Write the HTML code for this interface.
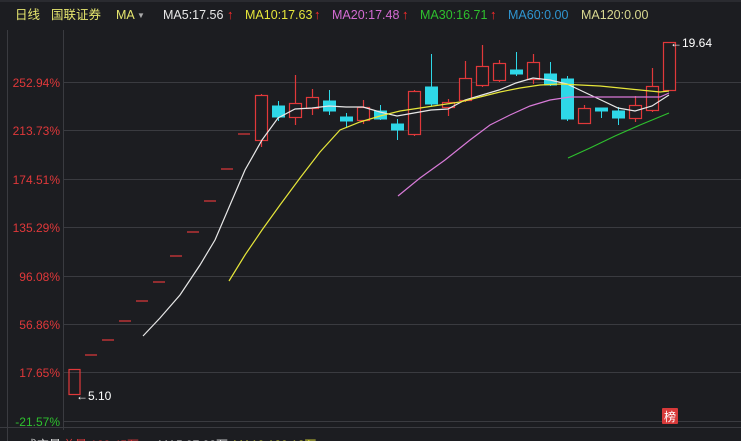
<!DOCTYPE html>
<html><head><meta charset="utf-8"><style>
html,body{margin:0;padding:0;background:#1c1d21;width:741px;height:441px;overflow:hidden}
svg{display:block}
text{font-family:"Liberation Sans","Noto Sans CJK SC",sans-serif}
</style></head><body>
<svg width="741" height="441" viewBox="0 0 741 441" xmlns="http://www.w3.org/2000/svg">
<rect width="741" height="441" fill="#1c1d21"/>
<rect x="0" y="0" width="741" height="2" fill="#2a2b30"/>
<line x1="7.5" y1="30" x2="7.5" y2="441" stroke="#3a3b40"/>
<line x1="63.5" y1="30" x2="63.5" y2="430" stroke="#3a3b40"/>
<g stroke="#3a3b40" stroke-width="1">
<line x1="63" y1="82.5" x2="741" y2="82.5"/>
<line x1="63" y1="130.5" x2="741" y2="130.5"/>
<line x1="63" y1="179.5" x2="741" y2="179.5"/>
<line x1="63" y1="227.5" x2="741" y2="227.5"/>
<line x1="63" y1="276.5" x2="741" y2="276.5"/>
<line x1="63" y1="324.5" x2="741" y2="324.5"/>
<line x1="63" y1="372.5" x2="741" y2="372.5"/>
<line x1="63" y1="421.5" x2="741" y2="421.5"/>
<line x1="0" y1="427.5" x2="741" y2="427.5"/>
</g>
<g font-size="12.5">
<text x="15" y="19" fill="#e6e66e">日线</text>
<text x="51" y="19" fill="#e6e66e">国联证券</text>
<text x="116" y="19" fill="#e6e66e">MA</text>
<text x="137" y="18" fill="#aaa" font-size="8">▼</text>
<text x="163" y="19" fill="#e8e8e8">MA5:17.56</text><text x="227" y="19" fill="#ff2a2a" font-weight="bold" font-size="13">↑</text>
<text x="245" y="19" fill="#e6e63a">MA10:17.63</text><text x="314" y="19" fill="#ff2a2a" font-weight="bold" font-size="13">↑</text>
<text x="332" y="19" fill="#d36bd3">MA20:17.48</text><text x="402" y="19" fill="#ff2a2a" font-weight="bold" font-size="13">↑</text>
<text x="420" y="19" fill="#2ec02e">MA30:16.71</text><text x="490" y="19" fill="#ff2a2a" font-weight="bold" font-size="13">↑</text>
<text x="508" y="19" fill="#2f95d0">MA60:0.00</text>
<text x="581" y="19" fill="#d8d890">MA120:0.00</text>
</g>
<g font-size="12" fill="#e0383a" text-anchor="end">
<text x="60" y="87">252.94%</text>
<text x="60" y="135">213.73%</text>
<text x="60" y="184">174.51%</text>
<text x="60" y="232">135.29%</text>
<text x="60" y="281">96.08%</text>
<text x="60" y="329">56.86%</text>
<text x="60" y="377">17.65%</text>
<text x="60" y="426" fill="#2ec02e">-21.57%</text>
</g>
<g stroke="#e0383a" stroke-width="1.2" fill="none">
<rect x="69" y="369.5" width="11" height="25"/>
<line x1="85" y1="355" x2="97" y2="355"/>
<line x1="102" y1="340" x2="114" y2="340"/>
<line x1="119" y1="321" x2="131" y2="321"/>
<line x1="136" y1="301" x2="148" y2="301"/>
<line x1="153" y1="282" x2="165" y2="282"/>
<line x1="170" y1="256" x2="182" y2="256"/>
<line x1="187" y1="232" x2="199" y2="232"/>
<line x1="204" y1="201" x2="216" y2="201"/>
<line x1="221" y1="169" x2="233" y2="169"/>
<line x1="238" y1="134" x2="250" y2="134"/>
<line x1="261.5" y1="94" x2="261.5" y2="147"/><rect x="255.5" y="95.5" width="12" height="45" fill="#1c1d21"/>
<line x1="295.5" y1="75" x2="295.5" y2="125"/><rect x="289.5" y="103.5" width="12" height="14" fill="#1c1d21"/>
<line x1="312.5" y1="89" x2="312.5" y2="115"/><rect x="306.5" y="97.5" width="12" height="11" fill="#1c1d21"/>
<line x1="363.5" y1="100" x2="363.5" y2="124"/><rect x="357.5" y="107.5" width="12" height="13" fill="#1c1d21"/>
<line x1="414.5" y1="90" x2="414.5" y2="136"/><rect x="408.5" y="91.5" width="12" height="43" fill="#1c1d21"/>
<line x1="448.5" y1="99" x2="448.5" y2="116"/><rect x="442.5" y="102.5" width="12" height="5" fill="#1c1d21"/>
<line x1="465.5" y1="61" x2="465.5" y2="102"/><rect x="459.5" y="78.5" width="12" height="22" fill="#1c1d21"/>
<line x1="482.5" y1="45" x2="482.5" y2="87"/><rect x="476.5" y="66.5" width="12" height="19" fill="#1c1d21"/>
<line x1="499.5" y1="60" x2="499.5" y2="82"/><rect x="493.5" y="63.5" width="12" height="17" fill="#1c1d21"/>
<line x1="533.5" y1="54" x2="533.5" y2="84"/><rect x="527.5" y="62.5" width="12" height="17" fill="#1c1d21"/>
<line x1="584.5" y1="105" x2="584.5" y2="124"/><rect x="578.5" y="108.5" width="12" height="15" fill="#1c1d21"/>
<line x1="635.5" y1="96" x2="635.5" y2="122"/><rect x="629.5" y="105.5" width="12" height="13" fill="#1c1d21"/>
<line x1="652.5" y1="68" x2="652.5" y2="112"/><rect x="646.5" y="86.5" width="12" height="24" fill="#1c1d21"/>
<rect x="663.5" y="42.5" width="12" height="48" fill="#1c1d21"/>
</g>
<g stroke="#2ed8e8" fill="#2ed8e8">
<line x1="278.5" y1="101" x2="278.5" y2="121"/><rect x="272.5" y="106" width="12" height="11"/>
<line x1="329.5" y1="90" x2="329.5" y2="115"/><rect x="323.5" y="101" width="12" height="10"/>
<line x1="346.5" y1="113" x2="346.5" y2="128"/><rect x="340.5" y="117" width="12" height="4"/>
<line x1="380.5" y1="105" x2="380.5" y2="120"/><rect x="374.5" y="111" width="12" height="8"/>
<line x1="397.5" y1="119" x2="397.5" y2="140"/><rect x="391.5" y="124" width="12" height="6"/>
<line x1="431.5" y1="54" x2="431.5" y2="106"/><rect x="425.5" y="87" width="12" height="17"/>
<line x1="516.5" y1="52" x2="516.5" y2="76"/><rect x="510.5" y="70" width="12" height="4"/>
<line x1="550.5" y1="62" x2="550.5" y2="86"/><rect x="544.5" y="74" width="12" height="11"/>
<line x1="567.5" y1="76" x2="567.5" y2="121"/><rect x="561.5" y="79" width="12" height="40"/>
<line x1="601.5" y1="108" x2="601.5" y2="118"/><rect x="595.5" y="108" width="12" height="3"/>
<line x1="618.5" y1="107" x2="618.5" y2="125"/><rect x="612.5" y="111" width="12" height="7"/>
</g>
<g fill="none" stroke-width="1.2">
<polyline stroke="#e8e8e8" points="143,336 160,318 180,295 200,265 215,240 230,205 245,170 262,140 278,118 295,109 312,108 329,106 346,107 363,107 380,112 397,116 414,113 431,110 448,109 465,100 482,95 499,90 516,83 533,78 550,80 567,84 584,92 601,100 618,108 635,111 652,106 669,95"/>
<polyline stroke="#e6e63a" points="229,281 245,255 262,230 280,205 300,178 320,152 340,130 360,122 380,116 400,111 420,108 440,105 460,102 480,97 500,92 520,88 540,85 560,84 580,85 600,86 620,88 640,90 660,92 669,91"/>
<polyline stroke="#d87ad8" points="398,196 420,178 445,160 470,140 490,125 510,115 530,106 550,100 570,97 600,97 640,97 660,97 669,93"/>
<polyline stroke="#2ec02e" points="568,158 590,148 615,136 640,125 669,113"/>
</g>
<text x="670" y="47" fill="#ffffff" font-size="12">←19.64</text>
<text x="76" y="400" fill="#ffffff" font-size="12">←5.10</text>
<rect x="662" y="408" width="16" height="16" fill="#d83a3a" rx="1"/>
<text x="670" y="421" fill="#fff" font-size="12" text-anchor="middle">榜</text>
<g font-size="12">
<text x="25" y="449" fill="#e8e8e8">成交量</text>
<text x="63" y="449" fill="#e0383a">总量:123.45万</text>
<text x="158" y="449" fill="#e8e8e8">MA5:97.98万</text>
<text x="233" y="449" fill="#e6e63a">MA10:120.12万</text>
</g>
</svg>
</body></html>
